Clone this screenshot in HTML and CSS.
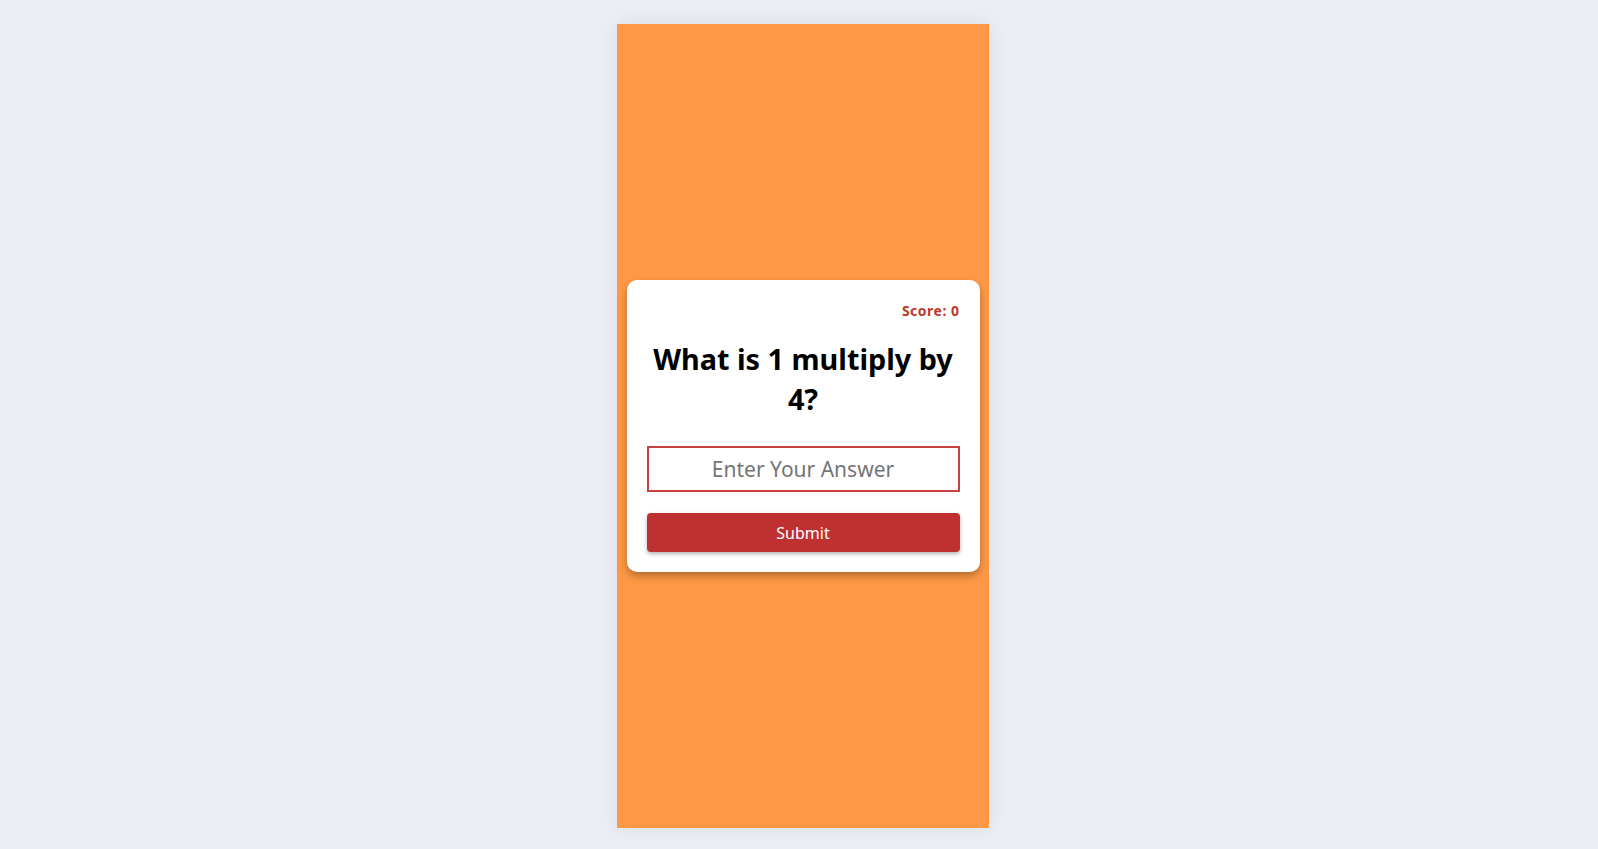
FILE: index.html
```html
<!DOCTYPE html>
<html lang="en">
<head>
<meta charset="UTF-8">
<meta name="viewport" content="width=device-width, initial-scale=1.0">
<title>Math Quiz</title>
<link rel="stylesheet" href="styles.css">
</head>
<body>

<div id="app">
  <form id="quizCard">
    <div class="score">Score: 0</div>
    <h1 id="question">What is 1 multiply by 4?</h1>
    <input type="text" id="answer" name="answer" placeholder="Enter Your Answer" autocomplete="off">
    <button type="submit">Submit</button>
  </form>
</div>

</body>
</html>
```

FILE: styles.css
```css
body {
  font-family: "Comic Sans MS", "Noto Sans", sans-serif;
  background-color: #ebeef4;
  margin: 0;
  padding: 24px 0 21px 8px;
  display: flex;
  justify-content: center;
}

#app {
  background-color: #ff9945;
  width: 372px;
  height: 804px;
  display: flex;
  justify-content: center;
  align-items: center;
  box-shadow: 0 0 20px rgba(0, 0, 0, 0.08);
}

#quizCard {
  background-color: #fff;
  width: 353px;
  box-sizing: border-box;
  padding: 21px 20px 20px;
  border-radius: 10px;
  box-shadow: 0 4px 8px rgba(0, 0, 0, 0.3);
  display: flex;
  flex-direction: column;
}

.score {
  text-align: right;
  color: #c0392b;
  font-size: 14px;
  font-weight: bold;
  line-height: 20px;
  letter-spacing: 0.5px;
}

h1 {
  text-align: center;
  font-size: 28.8px;
  line-height: 40px;
  margin: 18px 0 27px;
  color: #000;
}

#answer {
  height: 46px;
  box-sizing: border-box;
  border: 2px solid #c94040;
  font-family: inherit;
  font-size: 21px;
  text-align: center;
  outline: none;
  margin-bottom: 21px;
}

#answer::placeholder {
  color: #757575;
}

button[type="submit"] {
  height: 39px;
  background-color: #bf3030;
  color: #fff;
  border: none;
  border-radius: 4px;
  font-family: inherit;
  font-size: 16px;
  cursor: pointer;
  box-shadow: 0 2px 4px rgba(0, 0, 0, 0.3);
}
```
